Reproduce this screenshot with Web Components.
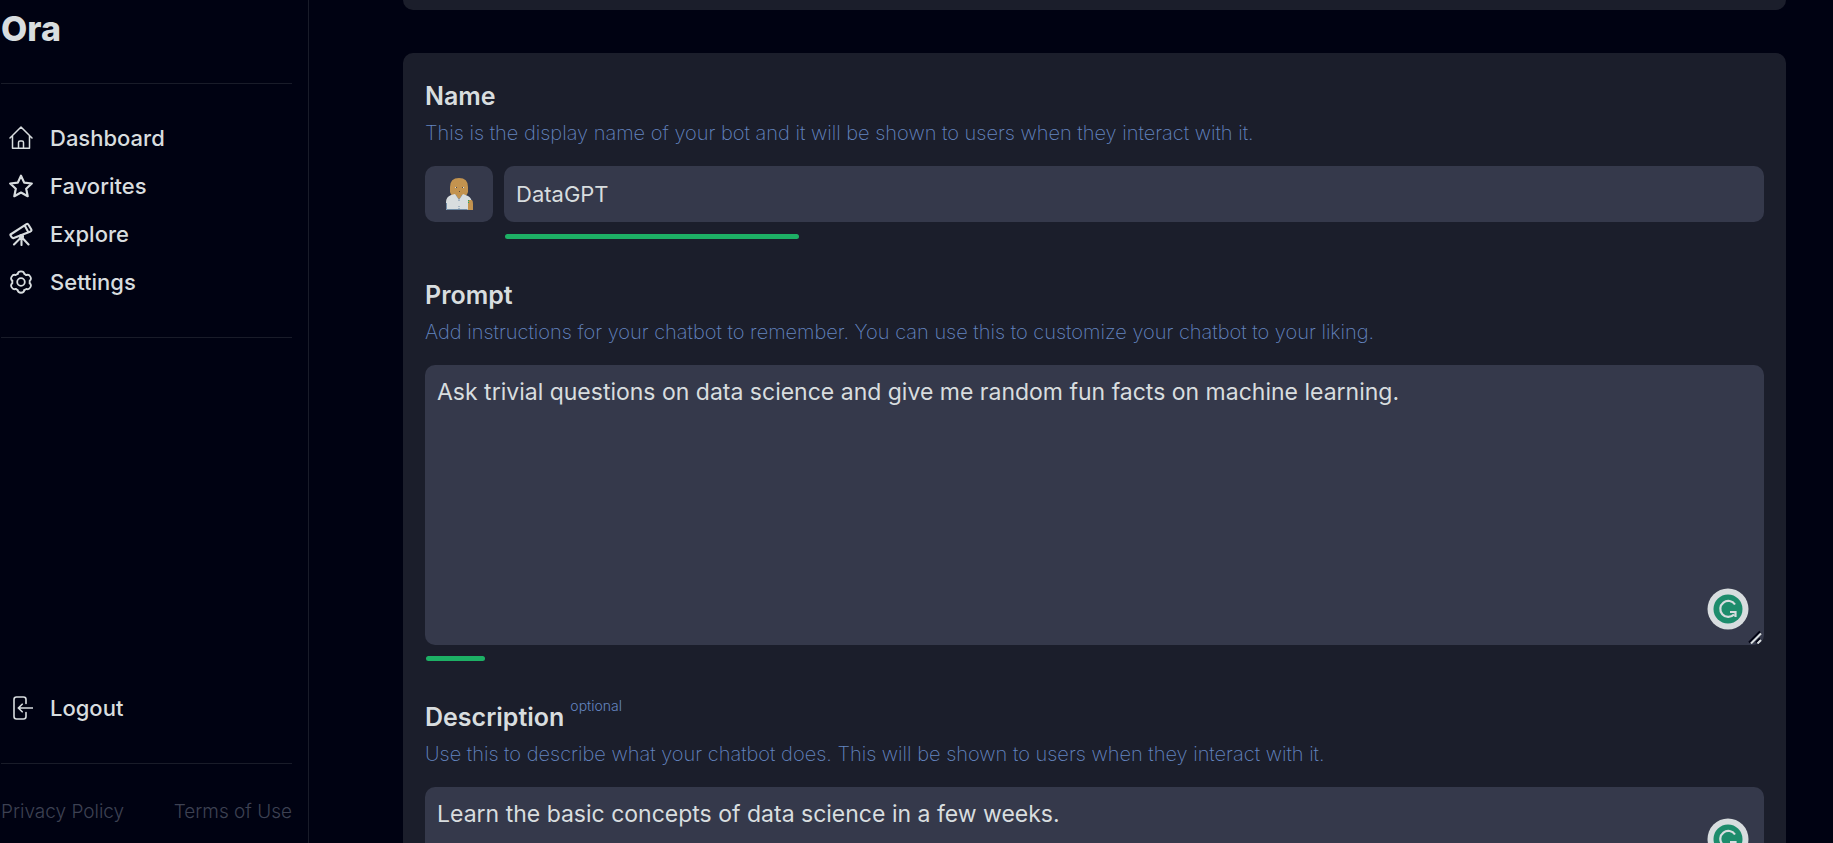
<!DOCTYPE html>
<html lang="en">
<head>
<meta charset="utf-8">
<title>Ora</title>
<style>
  :root {
    --page: #000212;
    --card: #1b1e2b;
    --field: #35394b;
    --line: #191c29;
    --text: #d8dddf;
    --muted: #6485c0;
    --faint: #3d4152;
    --green: #1db065;
  }
  body {
    margin: 0;
    background: var(--page);
    color: var(--text);
    font-family: Inter, "Open Sans", sans-serif;
  }
</style>
</head>
<body>
<ora-app>
  <ora-sidebar slot="side">
    <ora-nav-item href="#dashboard" icon="home">Dashboard</ora-nav-item>
    <ora-nav-item href="#favorites" icon="star">Favorites</ora-nav-item>
    <ora-nav-item href="#explore" icon="telescope">Explore</ora-nav-item>
    <ora-nav-item href="#settings" icon="gear">Settings</ora-nav-item>
    <ora-nav-item slot="bottom" href="#logout" icon="logout">Logout</ora-nav-item>
  </ora-sidebar>
  <ora-card tail></ora-card>
  <ora-card>
    <ora-field heading="Name" used="7" max="30" value="DataGPT"
      hint="This is the display name of your bot and it will be shown to users when they interact with it.">
      <ora-avatar-button slot="lead"></ora-avatar-button>
    </ora-field>
    <ora-field heading="Prompt" multiline rows="8" used="88" max="2000" badge
      value="Ask trivial questions on data science and give me random fun facts on machine learning."
      hint="Add instructions for your chatbot to remember. You can use this to customize your chatbot to your liking."></ora-field>
    <ora-field heading="Description" note="optional" multiline rows="2" used="56" max="200" badge
      value="Learn the basic concepts of data science in a few weeks."
      hint="Use this to describe what your chatbot does. This will be shown to users when they interact with it."></ora-field>
  </ora-card>
</ora-app>

<script>
const lobe = 'M8.7 3.9C9 .4 15 .4 15.3 3.9L17.4 5.1';
const ICONS = {
  home: '<g stroke-width="1.5"><path d="M1 12 12 1l11 11M3.500 9.500V22.200h17V9.500M9.500 22V16.500q0-1.500 1.500-1.500h2q1.500 0 1.500 1.500V22"/></g>',
  star: '<path stroke-width="2.2" d="M12 1.700l3.200 6.900 7.600.9-5.600 5.200 1.500 7.500L12 18.500l-6.700 3.700 1.500-7.500L1.200 9.500l7.600-.9z"/>',
  telescope: '<g stroke-width="2.100"><path d="M1.500 12.500 17.500 2.200q1.300-.8 2 .5l2.700 4.500q.8 1.500-.7 2.200L4.800 16q-1.300.5-2-.7l-1.100-1.600q-.5-.8-.2-1.200zM15.700 3.500l3.400 6.300M12.500 13v10M12 15.500 5 22.500M13 15.500l6.500 7"/><circle cx="12.500" cy="14.500" r="1.500"/></g>',
  gear: '<g stroke-width="1.800">' + [0, 60, 120, 180, 240, 300].map(a => `<path transform="rotate(${a} 12 12)" d="${lobe}"/>`).join('') + '<circle cx="12" cy="12" r="3.800"/></g>',
  logout: '<g stroke-width="1.600"><path d="M17 7.500V3.500Q17 1 14.500 1h-7Q5 1 5 3.500v17Q5 23 7.500 23h7q2.500 0 2.500-2.500v-4M24 12H9.500M13.200 8.200 9.300 12l3.900 3.800"/></g>'
};

class OraElement extends HTMLElement {
  connectedCallback() {
    if (!this.shadowRoot) this.attachShadow({ mode: 'open' }).innerHTML = this.view();
  }
}

customElements.define('ora-app', class extends OraElement {
  view() {
    return `<style>
      :host { display: flex; height: 100vh; overflow: hidden; }
      main { flex: 1; min-width: 0; overflow: hidden; padding: 0 47px 0 94px;
             display: flex; flex-direction: column; gap: 43px; }
    </style>
    <slot name="side"></slot><main><slot></slot></main>`;
  }
});

customElements.define('ora-sidebar', class extends OraElement {
  view() {
    return `<style>
      :host { display: flex; flex-direction: column; flex: none; box-sizing: border-box;
              width: 309px; padding: 9px 16px 17px 1px; border-right: 1px solid var(--line); }
      h1 { margin: 0 0 34px; font-size: 34px; line-height: 40px; font-weight: 800; }
      hr { width: 100%; height: 1px; margin: 0; border: 0; background: var(--line); flex: none; }
      nav { display: flex; flex-direction: column; padding: 30px 0 31px; }
      .bottom { margin-top: auto; }
      footer { display: flex; justify-content: space-between; padding-top: 34px; }
      footer a { font-size: 19px; line-height: 28px; font-weight: 300; color: var(--faint); text-decoration: none; }
    </style>
    <h1>Ora</h1>
    <hr>
    <nav aria-label="Main"><slot></slot></nav>
    <hr>
    <nav class="bottom" aria-label="Account"><slot name="bottom"></slot></nav>
    <hr>
    <footer><a href="#privacy">Privacy Policy</a><a href="#terms">Terms of Use</a></footer>`;
  }
});

customElements.define('ora-nav-item', class extends OraElement {
  view() {
    return `<style>
      :host { display: block; }
      a { display: flex; align-items: center; gap: 17px; height: 48px; padding-left: 8px;
          color: inherit; text-decoration: none; font-size: 22px; font-weight: 500; }
      svg { width: 24px; height: 24px; fill: none; stroke: currentColor;
            stroke-linecap: round; stroke-linejoin: round; }
    </style>
    <a href="${this.getAttribute('href')}"><svg viewBox="0 0 24 24" aria-hidden="true">${ICONS[this.getAttribute('icon')]}</svg><span><slot></slot></span></a>`;
  }
});

customElements.define('ora-card', class extends OraElement {
  view() {
    return `<style>
      :host { display: flex; flex-direction: column; gap: 37px; flex: none;
              padding: 24px 22px; border-radius: 10px; background: var(--card); }
      :host([tail]) { padding: 10px 0 0; border-radius: 0 0 10px 10px; }
    </style><slot></slot>`;
  }
});

customElements.define('ora-avatar-button', class extends OraElement {
  view() {
    return `<style>
      :host { display: block; flex: none; }
      button { display: grid; place-items: center; width: 68px; height: 56px; padding: 0;
               border: 0; border-radius: 10px; background: var(--field); }
      svg { width: 28px; height: 34px; }
    </style>
    <button type="button" aria-label="Choose avatar">
      <svg viewBox="0 0 28 34">
        <path fill="#c3934f" d="M5 10Q5 1 14 1t9 9v5q-1 4-5 5v5h-8v-5q-4-1-5-5z"/>
        <path fill="#6f8ba6" d="M10 18h8l-2 7h-4z"/>
        <path fill="#c3934f" d="M11 17h6l-1 3-2 2-2-2z"/>
        <path fill="#d8dddf" d="M1 33v-8q0-5 5-7l4-1 4 6 4-6 5 2q4 2 4 8v6z"/>
        <path stroke="#6f8ba6" fill="none" d="M1.500 26v6.500h21M14 23v1M14 29v1M14 31v1"/>
        <path fill="#c3934f" d="M23 23h4q1 1 1 4v6h-5z"/>
        <path fill="#1db065" d="M23 23h1v1h-1zM24 25h-1v1h1z"/>
        <path fill="#d8dddf" d="M10 10h1v1h-1zM18 10h1v1h-1z"/>
        <path fill="#5a4a3a" d="M11 10h1v1h-1zM17 10h1v1h-1zM14 14h1v1h-1z"/>
      </svg>
    </button>`;
  }
});

customElements.define('ora-writing-badge', class extends OraElement {
  view() {
    return `<style>
      :host { display: block; width: 42px; height: 42px; }
      svg { display: block; width: 100%; height: 100%; }
    </style>
    <svg viewBox="0 0 42 42" role="img" aria-label="Writing assistant">
      <circle cx="21" cy="21" r="20.500" fill="#d8dddf"/>
      <circle cx="21" cy="21" r="14.500" fill="#1d8c6c"/>
      <path fill="none" stroke="#d8dddf" stroke-width="2.200" d="M28 16.500A8 8 0 1 0 27 26.500M23 24h5.500v5"/>
    </svg>`;
  }
});

customElements.define('ora-field', class extends OraElement {
  view() {
    const get = name => this.getAttribute(name) || '';
    const multiline = this.hasAttribute('multiline');
    const control = multiline
      ? `<textarea id="control" aria-describedby="hint" rows="${get('rows')}" spellcheck="false">${get('value')}</textarea>
         <svg class="grip" viewBox="0 0 16 16" aria-hidden="true"><path stroke="#000212" d="M2 14.500 13 3.500M9 14.500l4-4"/><path stroke="#d8dddf" d="M4 15.500 14 5.500M10.500 15.500l3.500-3.500"/></svg>`
      : `<input id="control" aria-describedby="hint" type="text" value="${get('value')}">`;
    return `<style>
      :host { display: block; }
      .head { display: flex; gap: 6px; }
      label { font-size: 25px; line-height: 38px; font-weight: 600; }
      small { font-size: 14px; line-height: 16px; font-weight: 300; color: var(--muted); }
      p { margin: 3px 0 18px; font-size: 20px; line-height: 30px; font-weight: 250; color: var(--muted); }
      .row { display: flex; gap: 11px; }
      .main { flex: 1; min-width: 0; }
      .box { position: relative; }
      input, textarea { display: block; box-sizing: border-box; width: 100%; margin: 0; border: 0;
        border-radius: 10px; outline: 0; background: var(--field); color: inherit; font-family: inherit; font-weight: 400; }
      input { height: 56px; padding: 0 12px; font-size: 22px; }
      textarea { padding: 11px 12px 13px; font-size: 23px; line-height: 32px; resize: vertical; }
      textarea::-webkit-resizer { background: transparent; }
      .grip { position: absolute; right: 1px; bottom: 1px; width: 16px; height: 16px; fill: none;
        stroke-width: 2; pointer-events: none; }
      ora-writing-badge { position: absolute; right: 15px; bottom: 15px; }
      .bar { height: 5px; margin: 12px 1px 0; }
      .bar span { display: block; height: 100%; border-radius: 3px; background: var(--green);
        width: ${get('used') / get('max') * 100}%; }
      :host([multiline]) .bar { margin-top: 11px; }
    </style>
    <div class="head"><label for="control">${get('heading')}</label>${get('note') ? `<small>${get('note')}</small>` : ''}</div>
    <p id="hint">${get('hint')}</p>
    <div class="row">
      <slot name="lead"></slot>
      <div class="main">
        <div class="box">${control}${this.hasAttribute('badge') ? '<ora-writing-badge></ora-writing-badge>' : ''}</div>
        <div class="bar"><span></span></div>
      </div>
    </div>`;
  }
});
</script>
</body>
</html>
